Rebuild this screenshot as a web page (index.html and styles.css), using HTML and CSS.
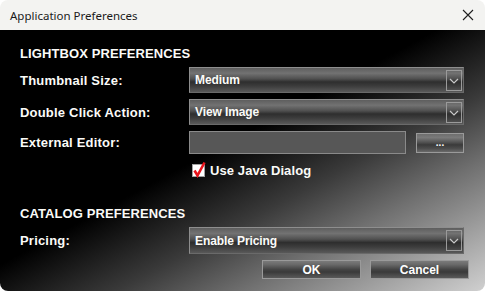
FILE: index.html
```html
<!DOCTYPE html>
<html>
<head>
<meta charset="utf-8">
<link rel="stylesheet" href="styles.css">
</head>
<body>
<div class="window">
  <div class="titlebar">
    <span class="title">Application Preferences</span>
    <svg class="close" width="12" height="12" viewBox="0 0 12 12"><path d="M1 1 L11 11 M11 1 L1 11" stroke="#1f1f1f" stroke-width="1.1" fill="none"/></svg>
  </div>
  <div class="content">
    <div class="section">LIGHTBOX PREFERENCES</div>
    <div class="row row-select">
      <span class="label">Thumbnail Size:</span>
      <div class="select"><span class="value">Medium</span><span class="arrow"><svg width="14" height="19" viewBox="0 0 14 19"><path d="M3 8 L7 12 L11 8" stroke="#c8c8c8" stroke-width="1.2" fill="none"/></svg></span></div>
    </div>
    <div class="row row-select">
      <span class="label">Double Click Action:</span>
      <div class="select"><span class="value">View Image</span><span class="arrow"><svg width="14" height="19" viewBox="0 0 14 19"><path d="M3 8 L7 12 L11 8" stroke="#c8c8c8" stroke-width="1.2" fill="none"/></svg></span></div>
    </div>
    <div class="row row-field">
      <span class="label">External Editor:</span>
      <div class="field-group"><div class="field"></div><div class="btn btn-small">...</div></div>
    </div>
    <div class="check-row">
      <span class="checkbox"><svg width="14" height="17" viewBox="0 0 14 17"><path d="M2.5 9.5 L5.5 14.5 L12.5 1.5" stroke="#e8141c" stroke-width="2.6" fill="none" stroke-linejoin="miter"/></svg></span>
      <span class="check-label">Use Java Dialog</span>
    </div>
    <div class="section section2">CATALOG PREFERENCES</div>
    <div class="row row-select row-pricing">
      <span class="label">Pricing:</span>
      <div class="select"><span class="value">Enable Pricing</span><span class="arrow"><svg width="14" height="19" viewBox="0 0 14 19"><path d="M3 8 L7 12 L11 8" stroke="#c8c8c8" stroke-width="1.2" fill="none"/></svg></span></div>
    </div>
    <div class="actions">
      <div class="btn btn-action">OK</div>
      <div class="btn btn-action">Cancel</div>
    </div>
  </div>
</div>
</body>
</html>
```
FILE: styles.css
```css
html, body {
  margin: 0;
  padding: 0;
  background: #ffffff;
}
.window {
  width: 485px;
  height: 291px;
  border-radius: 8px;
  overflow: hidden;
  display: flex;
  flex-direction: column;
}
.titlebar {
  height: 30px;
  flex: none;
  background: #f3f3f1;
  display: flex;
  align-items: center;
  justify-content: space-between;
  padding: 0 11px 0 10px;
}
.title {
  font-family: "Noto Sans", sans-serif;
  font-size: 11.5px;
  color: #1a1a1a;
}
.close {
  display: block;
}
.content {
  flex: 1;
  background: linear-gradient(to bottom right, #000 0%, #000 45%, #3a3a3a 62%, #707070 75%, #d0d0d0 100%);
  padding: 16px 16px 0 20px;
  display: flex;
  flex-direction: column;
  font-family: "Liberation Sans", Arial, sans-serif;
  font-weight: bold;
  color: #fbfbf8;
}
.section {
  font-size: 13px;
  line-height: 15px;
  height: 15px;
  letter-spacing: 0.1px;
}
.section2 {
  margin-top: 29px;
}
.row {
  display: grid;
  grid-template-columns: 169px 275px;
  align-items: center;
  margin-top: 6px;
}
.label {
  font-size: 13px;
  letter-spacing: 0.2px;
}
.select {
  height: 26px;
  box-sizing: border-box;
  border: 1px solid #8e8e8e;
  border-right-color: #6a6a6a;
  border-bottom-color: #6a6a6a;
  background: linear-gradient(to bottom, #5e5e5e 0%, #727272 22%, #505050 45%, #2e2e2e 58%, #3c3c3c 75%, #595959 100%);
  display: flex;
  align-items: center;
  justify-content: space-between;
  padding: 0 1px 0 5px;
}
.row-pricing .select {
  height: 27px;
}
.value {
  font-size: 12px;
  letter-spacing: -0.1px;
}
.arrow {
  width: 14px;
  height: 19px;
  border: 1px solid #9a9a9a;
  display: block;
}
.arrow svg {
  display: block;
}
.field-group {
  display: flex;
  align-items: center;
  gap: 10px;
}
.field {
  width: 217px;
  height: 23px;
  box-sizing: border-box;
  border: 1px solid #8a8a8a;
  background: #575757;
}
.btn {
  box-sizing: border-box;
  border: 1px solid #9a9a9a;
  background: linear-gradient(to bottom, #6e6e6e 0%, #7a7a7a 20%, #545454 45%, #3a3a3a 60%, #4c4c4c 80%, #6a6a6a 100%);
  color: #ffffff;
  display: flex;
  align-items: center;
  justify-content: center;
  font-size: 12px;
}
.btn-small {
  width: 48px;
  height: 20px;
  font-size: 10px;
  padding-top: 0;
}
.check-row {
  display: flex;
  align-items: center;
  margin-top: 9px;
  margin-left: 172px;
  height: 14px;
}
.checkbox {
  width: 13px;
  height: 13px;
  box-sizing: border-box;
  background: #ffffff;
  border: 1px solid #a0a0a0;
  position: relative;
  margin-right: 5px;
}
.checkbox svg {
  position: absolute;
  left: -1px;
  top: -4px;
}
.check-label {
  font-size: 13px;
  letter-spacing: 0.1px;
}
.actions {
  display: flex;
  justify-content: flex-end;
  gap: 9px;
  margin-top: 6px;
}
.btn-action {
  width: 99px;
  height: 19px;
  background: linear-gradient(to bottom, #7a7a7a 0%, #6a6a6a 20%, #444 50%, #3a3a3a 65%, #5a5a5a 100%);
}
```
